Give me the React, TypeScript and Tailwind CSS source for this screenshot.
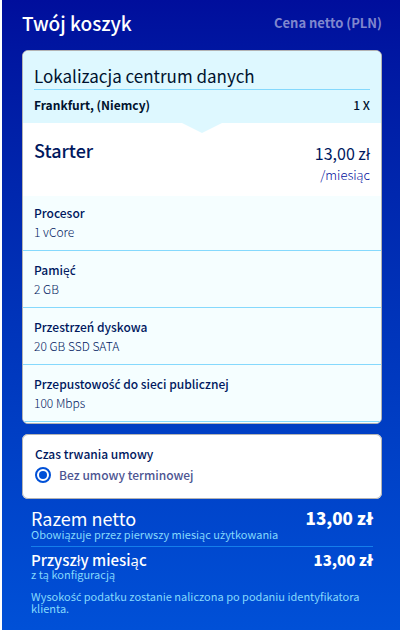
import React from 'react';

interface Spec {
  label: string;
  value: string;
}

const specs: Spec[] = [
  { label: 'Procesor', value: '1 vCore' },
  { label: 'Pamięć', value: '2 GB' },
  { label: 'Przestrzeń dyskowa', value: '20 GB SSD SATA' },
  { label: 'Przepustowość do sieci publicznej', value: '100 Mbps' },
];

// The CJK family has no ć, ś or ż of its own, so those letters use Noto Sans
const Pl: React.FC<{ children: string }> = ({ children }) => (
  <>
    {children.split(/([ćśż]+)/).map((part, i) =>
      i % 2 ? (
        <span key={i} className="font-['Noto_Sans',sans-serif] leading-none">
          {part}
        </span>
      ) : (
        part
      ),
    )}
  </>
);

const ProductCard: React.FC = () => (
  <section className="overflow-hidden rounded-md border border-[#b3b3b3] bg-white">
    <div className="relative bg-[#def8ff] px-[11px] pt-3 pb-2 text-[#00122e]">
      <h2 className="border-b border-[#85d9fd] text-[17px] leading-[26px]">Lokalizacja centrum danych</h2>
      <div className="flex justify-between pt-1 text-xs leading-[21px] font-medium">
        <span className="font-bold">Frankfurt, (Niemcy)</span>
        <span>1 X</span>
      </div>
      {/* Notch pointing at the product */}
      <svg className="absolute top-full left-1/2 h-2.5 w-10 -translate-x-1/2" viewBox="0 0 40 10" aria-hidden="true">
        <path d="M0 0H40L20 10Z" fill="#def8ff" />
      </svg>
    </div>

    <div className="flex justify-between px-[11px] pt-[15px] pb-[10px] text-[#00185e]">
      <h3 className="text-lg leading-6 font-medium">Starter</h3>
      <p className="pt-1 text-right text-base leading-[22px]">
        13,00 zł
        <span className="block text-[13px] font-light text-[#000e9c]">/miesiąc</span>
      </p>
    </div>

    <dl className="bg-[#f5feff] pb-px text-xs leading-[19px] text-[#00185e]">
      {specs.map((spec) => (
        <div key={spec.label} className="border-b border-[#85d9fd] px-[11px] py-[9px] first:pt-[7px]">
          <dt className="font-medium">
            <Pl>{spec.label}</Pl>
          </dt>
          <dd className="font-light">{spec.value}</dd>
        </div>
      ))}
    </dl>
  </section>
);

const CommitmentCard: React.FC = () => (
  <fieldset className="mt-2.5 rounded-md border border-[#b3b3b3] bg-white px-3 pt-2.5 pb-3.5 text-xs">
    <p className="leading-[18px] font-medium text-[#00185e]">Czas trwania umowy</p>
    <label className="mt-0.5 flex items-center gap-2 leading-[19px] font-medium text-[#4d5592]">
      <input
        type="radio"
        name="commitment"
        defaultChecked
        className="h-4 w-4 appearance-none rounded-full border-2 border-[#0050d7] bg-[#0050d7] bg-clip-content p-0.5"
      />
      Bez umowy terminowej
    </label>
  </fieldset>
);

const Totals: React.FC = () => (
  <div className="px-[9px] pt-2 text-white">
    <div className="border-b border-[#157eea] pb-1.5">
      <div className="flex justify-between text-lg leading-[22px]">
        <span>Razem netto</span>
        <strong className="text-[17px] font-black">13,00 zł</strong>
      </div>
      <p className="text-[11px] leading-[11px] text-[#85d9fd]">
        <Pl>Obowiązuje przez pierwszy miesiąc użytkowania</Pl>
      </p>
    </div>
    <div className="flex justify-between pt-1 text-[15px] leading-[18px]">
      <span className="font-medium">Przyszły miesiąc</span>
      <strong className="font-black">13,00 zł</strong>
    </div>
    <p className="text-[11px] leading-[11px] text-[#85d9fd]">z tą konfiguracją</p>
    <p className="pt-2.5 text-[11px] leading-3 text-[#85d9fd]">
      <Pl>Wysokość podatku zostanie naliczona po podaniu identyfikatora klienta.</Pl>
    </p>
  </div>
);

export default function App() {
  return (
    <main className="min-h-screen border-l-2 border-white bg-linear-to-b from-[#000e9c] to-[#0050d7] bg-origin-border px-5 pr-[18px] pb-3 font-['Noto_Sans_CJK_SC','Open_Sans',sans-serif]">
      <header className="flex h-[50px] items-center justify-between pb-1">
        <h1 className="text-[19px] font-medium text-white">Twój koszyk</h1>
        <span className="text-[13px] font-bold text-[#8087ce]">Cena netto (PLN)</span>
      </header>
      <ProductCard />
      <CommitmentCard />
      <Totals />
    </main>
  );
}
